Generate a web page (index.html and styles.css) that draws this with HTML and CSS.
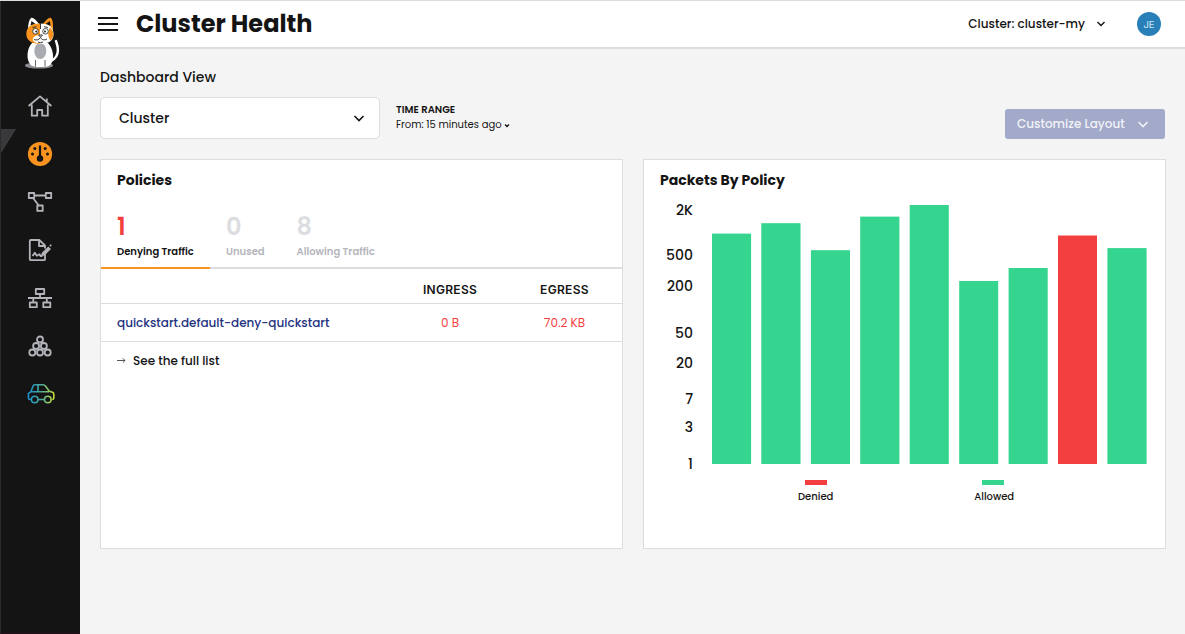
FILE: index.html
```html
<!DOCTYPE html>
<html lang="en">
<head>
<meta charset="utf-8">
<title>Cluster Health</title>
<link rel="stylesheet" href="styles.css">
</head>
<body>
<div class="app">
  <nav class="sidebar">
    <a class="logo" href="#" aria-label="Home">
      <svg width="40" height="54" viewBox="22 16 40 54">
        <ellipse cx="39" cy="65.400" rx="14" ry="3.200" fill="#8d8f94"/>
        <path d="M51 61c8-4 8-12 5-20" fill="none" stroke="#fff" stroke-width="2.400" stroke-linecap="round"/>
        <path d="M32 43c-5 5-6 16-2 21 2 3 6 3 10 3s9 0 11-3c4-5 2-16-3-21z" fill="#fff"/>
        <ellipse cx="40.300" cy="51" rx="6" ry="8" fill="#a9abb0"/>
        <path d="M35.500 60v6.500M45 60v6.500" stroke="#222" stroke-width=".7"/>
        <path d="M28 29c0-5 1-9 3-11 2-1 5 2 8 6z" fill="#fff"/>
        <path d="M43 24c3-4 6-7 8-6 2 2 2 6 2 12z" fill="#f7931e"/>
        <path d="M30.500 25.500l1-4.500 4 3zM45.500 24l4.500-3 .5 5z" fill="#141414"/>
        <path d="M40 23.500c-9 0-13.700 4-13.700 10.500 0 6 5 10 13.700 10z" fill="#f7931e"/>
        <path d="M40 23.500c9 0 13.500 4 13.500 10.500S49 44 40 44z" fill="#fff"/>
        <path d="M50 27.500c4.500 4 4.500 9 .5 13-3-4-3-9-.5-13z" fill="#f7931e"/>
        <path d="M33 40.500c-1-4 3-5 7-6 4 1 8 2 8 5-3 5-12 5-15 1z" fill="#fff"/>
        <circle cx="35.500" cy="31.300" r="2.800" fill="#fff" stroke="#222" stroke-width=".8"/>
        <circle cx="45.500" cy="31.300" r="2.800" fill="#fff" stroke="#222" stroke-width=".8"/>
        <circle cx="36.200" cy="31.500" r="1" fill="#222"/><circle cx="45" cy="31.500" r="1" fill="#222"/>
        <path d="M38.500 35h4L40.500 37.200zM34 39.500c2.500 1 5 .5 6.500-2 1.500 2.500 4 3 6.500 1.500M38 42q2.500 1.500 5 0M40.500 23v6M32.500 27.500l4-.8M44 26.700l4 .8" fill="none" stroke="#222" stroke-width=".9"/>
      </svg>
    </a>
    <a class="item" href="#" aria-label="Dashboard home"><svg class="icon" viewBox="0 0 28 28"><path d="M2.600 14 14 4.400 25.400 14M5.800 12.500v11.200h5.400v-5.700h5v5.700h5.600V12.500M20.800 9.800V6.500" /></svg></a>
    <a class="item active" href="#" aria-label="Cluster health"><svg class="icon" viewBox="0 0 28 28"><circle cx="14" cy="14" r="12.100" fill="#f7931e" stroke="none"/><path d="M14 5.500V16" stroke="#141414" stroke-width="2.200"/><circle cx="14" cy="18.500" r="3.200" fill="#141414" stroke="none"/><g fill="#141414" stroke="none"><circle cx="8.800" cy="8.500" r="1.500"/><circle cx="19.200" cy="8.500" r="1.500"/><circle cx="6.500" cy="14" r="1.500"/><circle cx="21.500" cy="14" r="1.500"/></g></svg></a>
    <a class="item" href="#" aria-label="Service graph"><svg class="icon" viewBox="0 0 28 28"><path d="M2.800 5h5.400v5H2.800zM19.800 5h5.400v5h-5.400zM11.300 17.500h5.400v5.400h-5.400zM8.200 7.500h11.600M7 10l5.800 7.500"/></svg></a>
    <a class="item" href="#" aria-label="Policies"><svg class="icon" viewBox="0 0 28 28"><path d="M19 18v5.200c0 .6-.5 1-1 1H4.800c-.6 0-1-.4-1-1V5c0-.6.400-1 1-1h8.500l5.700 5.500v3M13 4v6h6M6.500 20l2.300-3.200 2 3 2.700-1.500 1 1.700h2"/><path d="m15 20.300.8-3.500 6.500-6.400 2.700 2.600-6.500 6.400z" fill="#b3b4ba" stroke="none"/><path d="m24 10 1.200-1.200"/></svg></a>
    <a class="item" href="#" aria-label="Endpoints"><svg class="icon" viewBox="0 0 28 28"><path d="M9.800 5h8.400v5H9.800zM3.800 18.500h7v4.700h-7zM17.300 18.500h7v4.700h-7zM14 10v4M2 14h24M7.300 14v4.500M20.800 14v4.500"/></svg></a>
    <a class="item" href="#" aria-label="Clusters"><svg class="icon" viewBox="0 0 28 28"><circle cx="14" cy="7.500" r="3"/><circle cx="10.100" cy="14" r="3"/><circle cx="17.900" cy="14" r="3"/><circle cx="6.300" cy="20.500" r="3"/><circle cx="14" cy="20.500" r="3"/><circle cx="21.700" cy="20.500" r="3"/></svg></a>
    <a class="item tour" href="#" aria-label="Quick tour"><svg class="icon car" viewBox="0 0 28 28"><defs><linearGradient id="tour" gradientUnits="userSpaceOnUse" x1="1" y1="0" x2="28" y2="0"><stop offset="0" stop-color="#168fd0"/><stop offset=".55" stop-color="#50ad98"/><stop offset="1" stop-color="#c3df34"/></linearGradient></defs><path stroke="url(#tour)" d="M5.300 20.500H4c-1 0-1.600-.6-1.600-1.600v-4.200l2.500-2 2-5.200C7.200 6.300 8 5.800 9 5.800h7.800c1.300 0 2 .4 2.800 1.500l3.700 4.900 3.200 1c1 .4 1.300 1 1.300 2v3.700c0 1-.7 1.600-1.600 1.600M12 20.500h6.500M5 12.700h18M12 5.800v6.900M12 20.500a3.300 3.300 0 1 1-6.600 0 3.300 3.300 0 0 1 6.600 0zM25.100 20.500a3.300 3.300 0 1 1-6.600 0 3.300 3.300 0 0 1 6.600 0z"/></svg></a>
  </nav>
  <div class="page">
    <header class="topbar">
      <svg class="menu" width="20" height="16" viewBox="0 0 20 16"><path d="M0 2h20M0 8h20M0 14h20"/></svg>
      <h1>Cluster Health</h1>
      <span class="cluster">Cluster: cluster-my</span>
      <svg class="chevron cluster-chevron" width="10" height="10" viewBox="0 0 10 10"><path d="m1.500 3 3.500 3.500L8.500 3"/></svg>
      <span class="avatar">JE</span>
    </header>
    <main>
      <div class="label">Dashboard View</div>
      <div class="controls">
        <div class="select"><span>Cluster</span><svg class="chevron" width="12" height="12" viewBox="0 0 12 12"><path d="M1.500 4 6 8.500 10.500 4"/></svg></div>
        <div class="range"><b>TIME RANGE</b><span><span class="from">From: 15 minutes ago</span><svg class="chevron" width="6" height="6" viewBox="0 0 6 6"><path d="m1 2.500 2 2 2-2"/></svg></span></div>
        <button class="customize"><span>Customize Layout</span><svg class="chevron" width="12" height="12" viewBox="0 0 12 12"><path d="M1.500 4 6 8.500 10.500 4"/></svg></button>
      </div>
      <div class="cards">
        <section class="card">
          <h2>Policies</h2>
          <div class="tabs">
            <div class="tab on"><strong>1</strong><span>Denying Traffic</span></div>
            <div class="tab unused"><strong>0</strong><span>Unused</span></div>
            <div class="tab"><strong>8</strong><span>Allowing Traffic</span></div>
          </div>
          <div class="row head"><span></span><span>INGRESS</span><span>EGRESS</span></div>
          <div class="row data"><a href="#">quickstart.default-deny-quickstart</a><span>0 B</span><span>70.2 KB</span></div>
          <a class="full" href="#"><svg width="9" height="8" viewBox="0 0 9 8"><path d="M0 3.500h8M5.800 1.300 8 3.500 5.800 5.700"/></svg><span>See the full list</span></a>
        </section>
        <section class="card">
          <h2>Packets By Policy</h2>
          <svg class="chart" width="521" height="348" viewBox="644 200 521 348">
            <g class="axis" text-anchor="end">
              <text x="693" y="215">2K</text><text x="693" y="260">500</text><text x="693" y="291">200</text><text x="693" y="338">50</text><text x="693" y="368">20</text><text x="693" y="404">7</text><text x="693" y="432">3</text><text x="693" y="469">1</text>
            </g>
            <g fill="#35d48f">
              <rect x="712" y="233.600" width="39.100" height="230.400"/>
              <rect x="761.300" y="223.200" width="39.200" height="240.800"/>
              <rect x="810.900" y="250.200" width="39.100" height="213.800"/>
              <rect x="860.200" y="216.600" width="39.200" height="247.400"/>
              <rect x="909.700" y="205" width="39.100" height="259"/>
              <rect x="959.200" y="281" width="39" height="183"/>
              <rect x="1008.600" y="268" width="39.100" height="196"/>
              <rect x="1107.400" y="248.100" width="39.200" height="215.900"/>
              <rect x="982" y="480" width="22" height="5"/>
            </g>
            <g fill="#f33f3f">
              <rect x="1058" y="235.500" width="39" height="228.500"/>
              <rect x="805" y="480" width="22" height="5"/>
            </g>
            <g class="legend" text-anchor="middle"><text x="815.700" y="500">Denied</text><text x="994.200" y="500">Allowed</text></g>
          </svg>
        </section>
      </div>
    </main>
  </div>
</div>
</body>
</html>
```
FILE: styles.css
```css
* { box-sizing: border-box; }
body { margin: 0; font-family: Poppins, Inter, sans-serif; color: #141414; background: #f4f4f4; }
a { text-decoration: none; color: inherit; }
h1, h2 { margin: 0; }
.app { display: flex; height: 634px; border-top: 1px solid #dcdddd; overflow: hidden; }
.sidebar { width: 80px; flex: none; background: #141414; border-left: 1px solid #2b2b2b; border-bottom: 1px solid #240e18; display: flex; flex-direction: column; }
.logo { display: block; height: 81px; padding: 15px 0 0 21px; }
.logo svg { display: block; }
.item { display: flex; height: 48px; align-items: center; justify-content: center; padding-right: 1px; flex: none; }
.active { background: linear-gradient(to bottom right, #39393b 50%, transparent 51%) 0 0 / 15px 24px no-repeat; margin-top: -1px; padding-top: 1px; height: 49px; }
.icon { width: 28px; height: 28px; fill: none; stroke: #b3b4ba; stroke-width: 1.8; stroke-linejoin: round; overflow: visible; }
.tour { height: 45px; }
.car { stroke-width: 1.6; }
.page { flex: 1; min-width: 0; }
.topbar { height: 48px; background: #fff; border-bottom: 2px solid #dcdde1; display: flex; align-items: center; padding: 0 24px 0 18px; }
.menu { stroke: #141414; stroke-width: 2; }
.topbar h1 { font-size: 24px; line-height: 30px; font-weight: 700; margin-left: 18px; }
.cluster { margin-left: auto; font-size: 12px; font-weight: 500; }
.chevron { fill: none; stroke: currentColor; stroke-width: 1.6; flex: none; }
.cluster-chevron { margin-left: 11px; stroke-width: 1.4; }
.avatar { width: 24px; height: 24px; margin-left: 31px; border-radius: 50%; background: #2980b9; color: #d4e6f1; font: 9.5px Inter, sans-serif; display: flex; align-items: center; justify-content: center; }
main { padding: 17px 19px 0 20px; }
.label { font-size: 14px; font-weight: 500; line-height: 22px; }
.controls { display: flex; margin-top: 9px; height: 42px; }
.select { width: 280px; border: 1px solid #dcdde1; border-radius: 5px; background: #fff; display: flex; align-items: center; justify-content: space-between; padding: 0 14px 0 18px; font-size: 14px; font-weight: 500; }
.range { margin-left: 16px; padding-top: 5px; font-size: 10px; line-height: 15px; display: flex; flex-direction: column; }
.range b { font-weight: 600; }
.range > span { display: flex; align-items: center; gap: 2px; }
.range .chevron { stroke-width: 1.3; }
.customize { margin: 12px 1px 0 auto; width: 160px; height: 30px; border: 0; border-radius: 3px; background: #a3aac9; color: #f1f2f8; font: 500 12px Poppins, Inter, sans-serif; display: flex; align-items: center; justify-content: space-between; padding: 0 16px 0 12px; }
.cards { display: grid; grid-template-columns: 523px 523px; gap: 20px; margin-top: 20px; }
.card { height: 390px; background: #fff; border: 1px solid #dcdddd; }
.card h2 { font-size: 14px; line-height: 20px; font-weight: 700; margin: 10px 0 0 16px; }
.tabs { height: 79px; border-bottom: 2px solid #dcdde1; display: flex; }
.tab { height: 79px; padding: 21px 16px 0; color: #b5b6bc; display: flex; flex-direction: column; border-bottom: 2px solid transparent; font-size: 10px; font-weight: 600; line-height: 14px; }
.tab strong { font-size: 24px; line-height: 32px; font-weight: 600; color: #dcdde1; margin-bottom: 2px; }
.tab.on { width: 109px; color: #141414; border-color: #f7931e; }
.tab.on strong { color: #f33f3f; }
.unused { width: 70.5px; }
.tab span { white-space: nowrap; }
.row { display: grid; grid-template-columns: 276px 114px 115px; padding-left: 16px; align-items: center; border-bottom: 1px solid #dcdde1; font-size: 12px; text-align: center; }
.head { height: 35px; padding-top: 7px; font: 600 12px Inter, sans-serif; letter-spacing: .3px; }
.data { height: 38px; color: #f33f3f; }
.data a { color: #25337f; text-align: left; font-weight: 500; white-space: nowrap; }
.full { display: flex; align-items: center; gap: 7px; height: 38px; padding-left: 16px; font-size: 12px; font-weight: 500; }
.full svg { fill: none; stroke: #555; stroke-width: 1; }
.chart { display: block; margin-top: 10px; }
.axis { font-size: 14px; font-weight: 500; fill: #141414; }
.legend { font-size: 10px; font-weight: 500; fill: #141414; }
```
